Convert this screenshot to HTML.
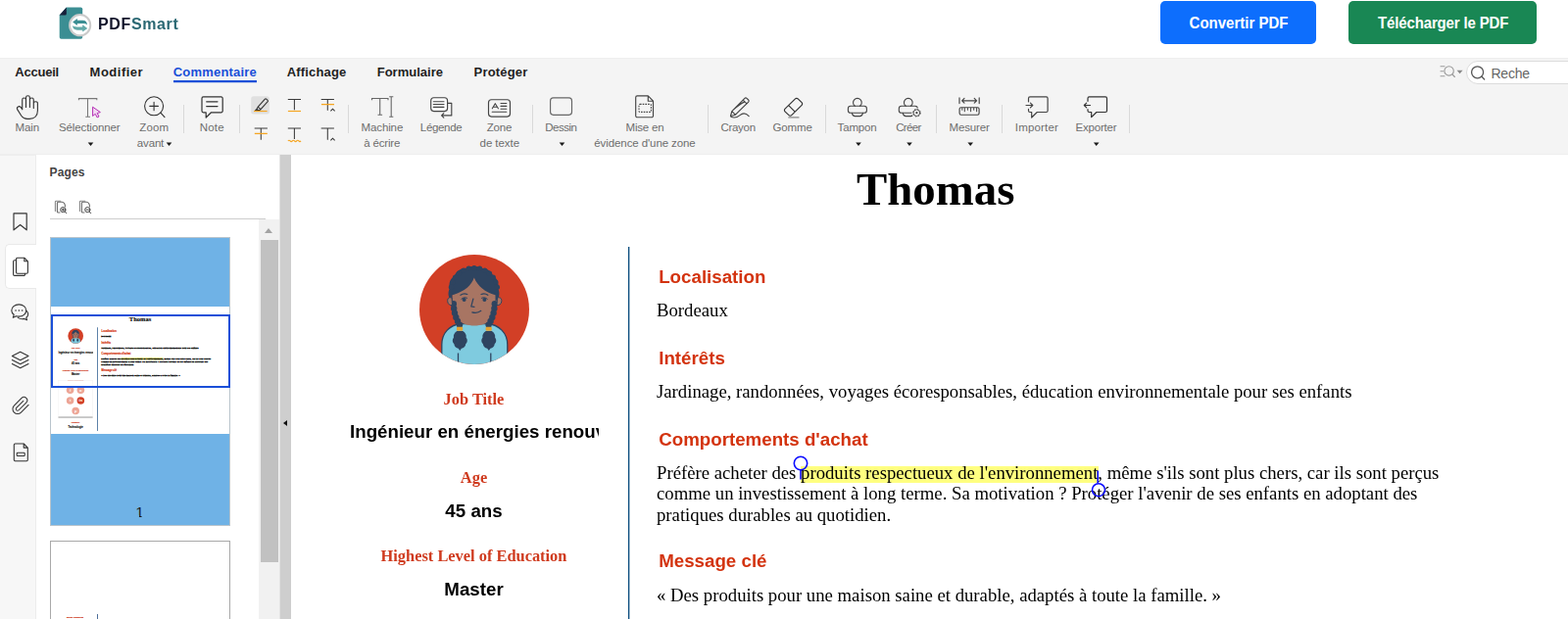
<!DOCTYPE html>
<html lang="fr">
<head>
<meta charset="utf-8">
<title>PDFSmart</title>
<style>
*{box-sizing:border-box;margin:0;padding:0}
html,body{width:1600px;height:632px;overflow:hidden;background:#fff}
body{position:relative;font-family:"Liberation Sans",sans-serif;color:#222}
.t{position:absolute;white-space:nowrap}
.a{position:absolute}
svg{position:absolute;overflow:visible}
.serif{font-family:"Liberation Serif",serif}
.b{font-weight:bold}
/* header */
#header{position:absolute;left:0;top:0;width:1600px;height:59px;background:#fff}
.btn{position:absolute;top:1px;height:44px;border-radius:5px}
.btn .t{color:#fff;font-weight:bold}
/* ribbon */
#ribbon{position:absolute;left:0;top:59px;width:1600px;height:100px;background:#f4f4f4;border-top:1px solid #eeeeee;border-bottom:2px solid #eeeeee}
.tab{font-weight:bold;color:#1f1f1f}
.tab.on{color:#1a4fd8}
.tl{color:#6e6e6e}
.sep{position:absolute;width:1px;background:#d9d9d9;top:107px;height:29px}
.car{position:absolute;width:0;height:0;border-left:2.900px solid transparent;border-right:2.900px solid transparent;border-top:3.300px solid #1a1a1a}
/* side */
#iconcol{position:absolute;left:0;top:159px;width:37px;height:473px;background:#f7f7f7;border-right:1px solid #ececec}
#pages{position:absolute;left:37px;top:158px;width:249px;height:474px;background:#fff}
#split{position:absolute;left:285px;top:158px;width:12px;height:474px;background:#cecece;border-left:1px solid #e3e3e3}
/* doc */
#doc{will-change:transform;position:absolute;left:297px;top:158px;width:1303px;height:474px;background:#fff;overflow:hidden}
.red{color:#d3330f}
.serif.red{color:#cf3a1e}
#mini .t{-webkit-text-stroke:.6px currentColor}
#mini .serif.blk:not(.b){-webkit-text-stroke:2.200px currentColor}
#mini .red{-webkit-text-stroke:1.100px currentColor}
#mini .vr{width:6px!important;background:#3f6a99!important;box-shadow:none!important}
.blk{color:#000}

</style>
</head>
<body>
<div id="header"></div><svg style="left:0px;top:0px" width="200" height="59" viewBox="0 0 200 59" ><path d="M67.800 7.500H82.400a1.800 1.800 0 0 1 1.800 1.800V37.900a1.800 1.800 0 0 1 -1.800 1.800H62.500a1.800 1.800 0 0 1 -1.800 -1.800V15.400z" fill="#3b8e93"/>
<path d="M67.800 7.500V13.900a1.500 1.500 0 0 1 -1.500 1.500H60.700z" fill="#17203a"/>
<circle cx="81.650" cy="25.700" r="10.600" fill="#fff" stroke="#cbcbcb" stroke-width="2"/>
<path d="M78.900 18.900L74.100 22.500 78.900 26.100V24.100H84.400C86.600 24.100 88 24.500 88.900 25.600 89 22.500 87.400 20.700 84.400 20.700H78.900z" fill="#3b8e93"/>
<path d="M84.200 25.300L89.300 28.900 84.200 32.500V30.700H78.900C75.900 30.700 74.100 28.900 74 26 75 27.100 76.400 27.400 78.900 27.400H84.200z" fill="#62a9a8"/></svg><div class="t b" style="top:15.26px;font-size:16px;line-height:20px;left:100.3px;letter-spacing:.62px;color:#11142a;will-change:transform;">PDF<span style="color:#2b6873">Smart</span></div><div class="btn" style="left:1184px;width:159px;background:#0d6efd"></div><div class="btn" style="left:1376px;width:192px;background:#198754"></div><div class="t b" style="top:14.80px;font-size:15px;line-height:18px;left:1264px;transform:translateX(-50%);text-align:center;color:#fff;transform:translateX(-50%) scaleY(1.08);transform-origin:50% 80%;">Convertir PDF</div><div class="t b" style="top:14.80px;font-size:15px;line-height:18px;left:1472.7px;transform:translateX(-50%);text-align:center;color:#fff;letter-spacing:-.15px;transform:translateX(-50%) scaleY(1.08);transform-origin:50% 80%;">Télécharger le PDF</div>
<div id="ribbon"></div><div class="t tab" style="top:65.60px;font-size:13px;line-height:16px;left:15.3px;letter-spacing:-0.236px;">Accueil</div><div class="t tab" style="top:65.60px;font-size:13px;line-height:16px;left:91.6px;letter-spacing:0.49px;">Modifier</div><div class="t tab on" style="top:65.60px;font-size:13px;line-height:16px;left:176.7px;letter-spacing:0.203px;">Commentaire</div><div class="t tab" style="top:65.60px;font-size:13px;line-height:16px;left:292.8px;letter-spacing:0.148px;">Affichage</div><div class="t tab" style="top:65.60px;font-size:13px;line-height:16px;left:384.7px;letter-spacing:0.021px;">Formulaire</div><div class="t tab" style="top:65.60px;font-size:13px;line-height:16px;left:483.6px;letter-spacing:0.167px;">Protéger</div><div class="a" style="left:177px;top:82px;width:85px;height:2px;background:#1a4fd8;box-shadow:0 1px 0 rgba(26,79,216,.25)"></div><div class="t tl" style="top:123.42px;font-size:11.5px;line-height:15px;left:15.4px;letter-spacing:-0.085px;">Main</div><div class="t tl" style="top:123.42px;font-size:11.5px;line-height:15px;left:60.05px;letter-spacing:-0.131px;">Sélectionner</div><div class="t tl" style="top:123.42px;font-size:11.5px;line-height:15px;left:142.3px;letter-spacing:0.122px;">Zoom</div><div class="t tl" style="top:138.62px;font-size:11.5px;line-height:15px;left:139.8px;letter-spacing:-0.154px;">avant</div><div class="t tl" style="top:123.42px;font-size:11.5px;line-height:15px;left:203.8px;letter-spacing:0.162px;">Note</div><div class="t tl" style="top:123.42px;font-size:11.5px;line-height:15px;left:368.55px;letter-spacing:-0.12px;">Machine</div><div class="t tl" style="top:138.62px;font-size:11.5px;line-height:15px;left:371.3px;letter-spacing:-0.193px;">à écrire</div><div class="t tl" style="top:123.42px;font-size:11.5px;line-height:15px;left:428.8px;letter-spacing:-0.315px;">Légende</div><div class="t tl" style="top:123.42px;font-size:11.5px;line-height:15px;left:496.7px;letter-spacing:-0.207px;">Zone</div><div class="t tl" style="top:138.62px;font-size:11.5px;line-height:15px;left:489.55px;letter-spacing:-0.063px;">de texte</div><div class="t tl" style="top:123.42px;font-size:11.5px;line-height:15px;left:556.3px;letter-spacing:-0.527px;">Dessin</div><div class="t tl" style="top:123.42px;font-size:11.5px;line-height:15px;left:638.55px;letter-spacing:-0.208px;">Mise en</div><div class="t tl" style="top:138.62px;font-size:11.5px;line-height:15px;left:606.3px;letter-spacing:-0.093px;">évidence d'une zone</div><div class="t tl" style="top:123.42px;font-size:11.5px;line-height:15px;left:735.4px;letter-spacing:-0.288px;">Crayon</div><div class="t tl" style="top:123.42px;font-size:11.5px;line-height:15px;left:788.55px;letter-spacing:-0.158px;">Gomme</div><div class="t tl" style="top:123.42px;font-size:11.5px;line-height:15px;left:854.55px;letter-spacing:-0.138px;">Tampon</div><div class="t tl" style="top:123.42px;font-size:11.5px;line-height:15px;left:914.2px;letter-spacing:-0.637px;">Créer</div><div class="t tl" style="top:123.42px;font-size:11.5px;line-height:15px;left:968.55px;letter-spacing:-0.159px;">Mesurer</div><div class="t tl" style="top:123.42px;font-size:11.5px;line-height:15px;left:1035.8px;letter-spacing:0.166px;">Importer</div><div class="t tl" style="top:123.42px;font-size:11.5px;line-height:15px;left:1097.55px;letter-spacing:-0.21px;">Exporter</div><div class="sep" style="left:187.0px"></div><div class="sep" style="left:243.5px"></div><div class="sep" style="left:354.8px"></div><div class="sep" style="left:542.8px"></div><div class="sep" style="left:722.0px"></div><div class="sep" style="left:841.8px"></div><div class="sep" style="left:954.9px"></div><div class="sep" style="left:1022.0px"></div><div class="sep" style="left:1151.9px"></div><div class="a" style="left:1496px;top:62px;width:130px;height:24px;border:1px solid #dcdcdc;border-radius:12px;background:#fff"></div><div class="t" style="top:65.85px;font-size:14px;line-height:18px;left:1521.5px;color:#666;letter-spacing:-.25px;">Reche</div><svg style="left:0px;top:0px" width="1600" height="160" viewBox="0 0 1600 160" ><g fill="none" stroke="#333" stroke-width="1.1" stroke-linecap="round" stroke-linejoin="round" ><path d="M22.700 111.400V101.900c0-1 .8-1.900 1.900-1.900s1.900.9 1.900 1.900V109.400M26.500 109.400V99.700c0-1.100.9-1.900 1.950-1.900s1.950.8 1.950 1.900V109.400M30.400 109.400V101.900c0-1.100.9-1.900 1.950-1.900s1.950.8 1.950 1.900V110.400M34.300 110.400V105.600c0-1 .9-1.800 2-1.800s2.100.8 2.100 1.800v7.200c0 5.300-3.300 8.600-8.300 8.600h-2.300c-2.700 0-4.500-1.100-6-3.200l-4-6.300c-.7-1.200-.3-2.300.6-2.900s2.100-.4 2.900.6l1.500 2.200" /></g><path d="M80.400 102.300V100.600H98.800V102.300M89.500 100.600V119.300M87.300 119.300H92" stroke="#777" stroke-width="1.050" fill="none"/><path d="M94.600 109.200V118.500l2.600-2.200 1.900 3.600 1.900-.9-1.800-3.500 3.200-.9z" fill="#f3d9f3" stroke="#b32cb3" stroke-width="1" stroke-linejoin="round"/><g fill="none" stroke="#333" stroke-width="1.1" stroke-linecap="round" stroke-linejoin="round" ><circle cx="157.100" cy="108.300" r="9.500"/><path d="M152.800 108.400H161.400M157.100 104.200V112.700M163.900 115.200L168 119.600"/></g><g fill="none" stroke="#333" stroke-width="1.2" stroke-linecap="round" stroke-linejoin="round" ><path d="M207.500 98.900H225.700a1.500 1.500 0 0 1 1.500 1.500V113.300a1.500 1.500 0 0 1 -1.500 1.500H215.500L210.200 120V114.800H207.500a1.500 1.500 0 0 1 -1.500 -1.500V100.400a1.500 1.500 0 0 1 1.500 -1.500z"/><path d="M210.700 103.800H222M210.700 108.600H222"/></g><rect x="256.200" y="98.200" width="18.700" height="18.300" rx="2.500" fill="#e0e0e0"/><g fill="none" stroke="#333" stroke-width="1.1" stroke-linecap="round" stroke-linejoin="round" ><path d="M263.200 109.200L270.400 101.200a1 1 0 0 1 1.400-.1l1.300 1.200a1 1 0 0 1 .1 1.400L266 111.700zM263.200 109.200L262 111.300 264 113 266 111.700M262 111.300L260.600 112.600 263 112.600 264 113"/></g><path d="M259 113.500H272.600" stroke="#f5a623" stroke-width="1.200"/><path d="M293.79999999999995 101.4H307.0M300.4 101.4V112.2" stroke="#3a3a3a" stroke-width="1.05" fill="none"/><path d="M293.900 113.500H307" stroke="#f5a623" stroke-width="1.200"/><path d="M327.7 101.4H340.90000000000003M334.3 101.4V112.7" stroke="#3a3a3a" stroke-width="1.05" fill="none"/><path d="M327.900 106.600H341" stroke="#f5a623" stroke-width="1.300"/><path d="M337.400 113.300L339.500 111.200 341.600 113.300" stroke="#333" stroke-width="1.100" fill="none"/><path d="M259.7 131H272.90000000000003M266.3 131V142.8" stroke="#3a3a3a" stroke-width="1.05" fill="none"/><path d="M259.800 136.400H272.800" stroke="#f5a623" stroke-width="1.300"/><path d="M293.79999999999995 131H307.0M300.4 131V142" stroke="#3a3a3a" stroke-width="1.05" fill="none"/><path d="M293.900 143.900q1.100-1.300 2.200 0t2.200 0 2.200 0 2.200 0 2.200 0 2.100 0" stroke="#f5a623" stroke-width="1.200" fill="none"/><path d="M327.7 131H340.90000000000003M334.3 131V142.8" stroke="#3a3a3a" stroke-width="1.05" fill="none"/><path d="M337.400 143.300L339.500 141.200 341.600 143.300" stroke="#333" stroke-width="1.100" fill="none"/><path d="M379.500 102.200V100.500H396V102.200M387.700 100.500V117.300M385.500 117.300H390.100M397.200 98.700H401.300M399.200 98.700V119.300M397.200 119.300H401.300" stroke="#666" stroke-width="1.100" fill="none"/><g fill="none" stroke="#444" stroke-width="1.15" stroke-linecap="round" stroke-linejoin="round" ><rect x="439.700" y="99.700" width="16.900" height="13.900" rx="3" fill="#fafafa"/><path d="M442.300 103.700H453M442.300 106.500H453M442.300 109.300H453"/><path d="M456.800 105.300H460.800V117.900H450.600M452.800 115.700L450.600 117.900 452.800 120.100"/></g><g fill="none" stroke="#444" stroke-width="1.15" stroke-linecap="round" stroke-linejoin="round" ><rect x="498.500" y="101.700" width="22" height="17.400" rx="3"/><path d="M502.300 110.800L505.300 105.700 508.400 110.800M503.300 109.300H507.400" stroke-width="1.100"/><path d="M511 105.500H516.800M511 108.400H516.800M511 111.200H516.800M502.200 114.300H516.800" stroke-width="1.100"/></g><g fill="none" stroke="#666" stroke-width="1.15" stroke-linecap="round" stroke-linejoin="round" ><rect x="561.600" y="99.900" width="21.900" height="17.400" rx="3"/></g><g fill="none" stroke="#444" stroke-width="1.15" stroke-linecap="round" stroke-linejoin="round" ><path d="M650.300 97.900H661.300L666.500 103.200V118.200a1.600 1.600 0 0 1 -1.600 1.600H650.300a1.600 1.600 0 0 1 -1.600 -1.600V99.500a1.600 1.600 0 0 1 1.600 -1.600zM661.300 97.900V103.200H666.500"/><rect x="652" y="106.400" width="12.400" height="8" rx="1" stroke-dasharray="1.600 1.100" stroke-width="1.100" stroke-linecap="butt"/></g><g fill="none" stroke="#444" stroke-width="1.2" stroke-linecap="round" stroke-linejoin="round" ><path d="M746.800 113.700L759.900 100.400a1.500 1.500 0 0 1 2.100 0L763.700 102a1.500 1.500 0 0 1 0 2.100L750.400 117.200 745.500 118.500zM758.200 102.200L762 105.900M746.800 113.700L750.400 117.200M748.900 111.700Q755 106 760 103.900" stroke-width="1.150"/><path d="M745.900 119.300C749.500 120.900 752.500 119.700 755 117.600 758 115.100 761 115.300 764.200 118.600" stroke-width="1.100"/></g><g fill="none" stroke="#333" stroke-width="1.15" stroke-linecap="round" stroke-linejoin="round" ><path d="M801 111.200L811.500 100.900a1.900 1.900 0 0 1 2.700 0L818.100 104.700a1.900 1.900 0 0 1 0 2.700L807.700 117.700a1.900 1.900 0 0 1 -2.700 0L801 113.900a1.900 1.900 0 0 1 0 -2.700zM804.700 107.600L811.200 114.200"/><path d="M804.800 119.900H815" stroke="#888"/></g><g fill="none" stroke="#444" stroke-width="1.1" stroke-linecap="round" stroke-linejoin="round" transform="translate(0 92)"><path d="M872.4 16.300A4.350 4.350 0 1 1 877.4 16.300"/><rect x="865.4" y="16.300" width="19" height="7" rx="2.600"/><path d="M869.3 23.300C869.8 25.500 870.5999999999999 26.600 872.3 26.600H877.5C879.1999999999999 26.600 880.0 25.500 880.5 23.300"/></g><g fill="none" stroke="#444" stroke-width="1.1" stroke-linecap="round" stroke-linejoin="round" transform="translate(0 92)"><path d="M924.3000000000001 16.300A4.350 4.350 0 1 1 929.3000000000001 16.300"/><rect x="917.3000000000001" y="16.300" width="19" height="7" rx="2.600"/><path d="M921.2 23.300C921.7 25.500 922.5 26.600 924.2 26.600H929.4000000000001C931.1 26.600 931.9000000000001 25.500 932.4000000000001 23.300"/></g><circle cx="935.400" cy="115.200" r="4.300" fill="#f4f4f4" stroke="#f4f4f4" stroke-width="1.500"/><g fill="none" stroke="#444" stroke-width="1" stroke-linecap="round" stroke-linejoin="round" ><circle cx="935.400" cy="115.200" r="3.900" stroke-width=".8" stroke-dasharray="1.500 1.560" stroke-linecap="butt"/><circle cx="935.400" cy="115.200" r="3.300" stroke-width=".9"/><circle cx="935.400" cy="115.200" r="1.100" fill="#444" stroke="none"/></g><g fill="none" stroke="#444" stroke-width="1.15" stroke-linecap="round" stroke-linejoin="round" ><path d="M979 99.900V105.600M999.200 99.900V105.600M981.600 102.800H996.600M984 100.400L981.600 102.800 984 105.200M994.200 100.400L996.600 102.800 994.200 105.200" stroke-width="1.150"/><rect x="979.100" y="109.700" width="20" height="7.500" rx="1.600"/><path d="M981.800 110V112.700M984.300 110V114.200M987.400 110V112.700M990.600 110V114.200M993.700 110V112.700M996.600 110V114.200" stroke-width="1" stroke-linecap="butt"/></g><g fill="none" stroke="#444" stroke-width="1.2" stroke-linecap="round" stroke-linejoin="round" ><path d="M1049.500 103.800V100.400a1.500 1.500 0 0 1 1.500-1.500H1067.600a1.500 1.500 0 0 1 1.500 1.500V113a1.500 1.500 0 0 1 -1.500 1.500H1058.300L1052.700 120V114.500H1051a1.500 1.500 0 0 1 -1.500 -1.500V111.400"/><path d="M1047 107.500H1053.700M1051.400 105.100L1053.800 107.500 1051.400 109.900" stroke-width="1.150"/></g><g fill="none" stroke="#333" stroke-width="1.2" stroke-linecap="round" stroke-linejoin="round" ><path d="M1110 103.300V100.400a1.500 1.500 0 0 1 1.500-1.500H1128a1.500 1.500 0 0 1 1.500 1.500V113a1.500 1.500 0 0 1 -1.500 1.500H1118.900L1113.700 119.700V114.500H1111.500a1.500 1.500 0 0 1 -1.500 -1.500V111.700"/><path d="M1106.300 107.500H1112.500M1108.700 105.100L1106.300 107.500 1108.700 109.900" stroke-width="1.150"/></g><g fill="none" stroke="#9a9a9a" stroke-width="1.1" stroke-linecap="round" stroke-linejoin="round" ><path d="M1470 67.700H1474M1470 72.700H1472.700M1470 77.700H1474"/><circle cx="1478.600" cy="72.400" r="4.700"/><path d="M1482 76L1484.400 78.500"/></g><path d="M1486.600 71.700H1492.600L1489.600 75.200z" fill="#8a8a8a"/><path d="M89.7 145.6H95.3L92.5 148.9z" fill="#1a1a1a"/><path d="M169.7 145.6H175.3L172.5 148.9z" fill="#1a1a1a"/><path d="M570.7 145.6H576.3L573.5 148.9z" fill="#1a1a1a"/><path d="M873.2 145.6H878.8L876.0 148.9z" fill="#1a1a1a"/><path d="M925.2 145.6H930.8L928.0 148.9z" fill="#1a1a1a"/><path d="M987.4 145.6H993.0L990.2 148.9z" fill="#1a1a1a"/><path d="M1115.9 145.6H1121.5L1118.7 148.9z" fill="#1a1a1a"/><g fill="none" stroke="#555" stroke-width="1.3" stroke-linecap="round" stroke-linejoin="round" ><circle cx="1507.600" cy="73.800" r="6"/><path d="M1512 78.300L1514.700 81"/></g></svg>
<div id="iconcol"></div><div id="pages"></div><div id="split"></div><div class="a" style="left:5px;top:249px;width:32px;height:46px;background:#fff;border:1px solid #e9e9e9;border-right:0;border-radius:5px 0 0 5px"></div><div class="t b" style="top:168.94px;font-size:12px;line-height:15px;left:50.5px;color:#444;letter-spacing:.15px;">Pages</div><div class="a" style="left:51px;top:223px;width:220px;height:1px;background:#cdcdcd"></div><div class="a" style="left:264px;top:224px;width:21px;height:408px;background:#f1f1f1"></div><div class="a" style="left:266px;top:245px;width:18px;height:329px;background:#c1c1c1"></div><div class="a" style="left:270px;top:232.500px;width:0;height:0;border-left:4.500px solid transparent;border-right:4.500px solid transparent;border-bottom:5px solid #a3a3a3"></div><div class="a" style="left:288.500px;top:428.500px;width:0;height:0;border-top:3px solid transparent;border-bottom:3px solid transparent;border-right:4.500px solid #111"></div><div class="a" style="left:51px;top:242px;width:184px;height:294.500px;background:#6fb2e6;border:1px solid #b9c4cc"></div><div class="a" style="left:52px;top:313px;width:182px;height:130px;background:#fff;overflow:hidden"><div class="a" id="mini" style="left:-1.500px;top:0;width:1303px;height:942px;transform:scale(.14,.138);transform-origin:0 0"><div class="t serif b blk" style="top:67.59px;font-size:46.83px;line-height:54px;left:657.7px;transform:translateX(-50%);text-align:center;">Thomas</div><div class="a vr" style="left:344px;top:154.0px;width:1px;height:766.0px;background:#0e4f80;box-shadow:1px 0 0 rgba(14,79,128,.35),-1px 0 0 rgba(14,79,128,.1)"></div><svg style="left:131px;top:162px" width="112" height="112" viewBox="0 0 112 112" ><defs><clipPath id="avm"><circle cx="56" cy="56" r="56"/></clipPath></defs>
<circle cx="56" cy="56" r="56" fill="#d23f26"/>
<g clip-path="url(#avm)">
<path d="M22.8 114V92c0-12 8-20.500 20-21.500h26.500c12 1 20.500 9.500 20.500 21.500v22z" fill="#7fcbdf" stroke="#2e4460" stroke-width="1.300"/>
<path d="M39.500 100.500V114M72.800 100.500V114" stroke="#2e4460" stroke-width="1.300" fill="none"/>

<path d="M33.500 36c0-9 8-14 22.500-14s23 5 23 14v17c0 11-9 19.500-23 19.500s-22.500-8.500-22.500-19.500z" fill="#a87563"/>
<path d="M55.800 23.500c-3 8-9 13.500-20.500 17.200l-1.800.6v6c-3.500-1-5.500-8.300-2.500-12.800-1.500-5.500.5-10 4.500-12.500 2-5.500 7-8.500 12.500-8.300 4.500-2.700 10.500-2.700 15 0 5.500-.2 10.500 2.800 12.500 8.300 4 2.500 6 7 4.500 12.500 3 4.500 1 11.800-2.500 12.800v-6c-10.500-3-18-9-21.700-17.800z" fill="#2e4460"/>
<g fill="#2e4460"><circle cx="32.5" cy="33.3" r="2.700"/><circle cx="34.0" cy="28.1" r="2.700"/><circle cx="36.6" cy="23.3" r="2.700"/><circle cx="40.4" cy="19.3" r="2.700"/><circle cx="45.1" cy="16.2" r="2.700"/><circle cx="50.3" cy="14.3" r="2.700"/><circle cx="55.9" cy="13.7" r="2.700"/><circle cx="61.5" cy="14.3" r="2.700"/><circle cx="66.7" cy="16.2" r="2.700"/><circle cx="71.4" cy="19.3" r="2.700"/><circle cx="75.2" cy="23.3" r="2.700"/><circle cx="77.8" cy="28.1" r="2.700"/><circle cx="79.3" cy="33.3" r="2.700"/></g><g fill="#2e4460"><circle cx="34.8" cy="50.3" r="3.200"/><circle cx="76.8" cy="50.3" r="3.200"/><circle cx="35.2" cy="55" r="3.200"/><circle cx="76.4" cy="55" r="3.200"/><circle cx="36" cy="59.6" r="3.200"/><circle cx="75.6" cy="59.6" r="3.200"/><circle cx="37.3" cy="64" r="3.200"/><circle cx="74.3" cy="64" r="3.200"/><circle cx="39" cy="68" r="3.200"/><circle cx="72.6" cy="68" r="3.200"/><circle cx="41" cy="71.6" r="3.200"/><circle cx="70.6" cy="71.6" r="3.200"/></g>
<path d="M38.300 78c-2.500 1.500-4 4-3.300 6.500-1.800 2-1.600 5 .4 6.800.2 2.500 2 4.300 4.300 4.500l1.600 2.200 1.600-2.200c2.300-.2 4.100-2 4.300-4.500 2-1.800 2.200-4.800.4-6.800.7-2.500-.8-5-3.300-6.500zM67.800 78c-2.500 1.500-4 4-3.300 6.500-1.800 2-1.600 5 .4 6.800.2 2.500 2 4.300 4.300 4.500l1.600 2.200 1.600-2.200c2.300-.2 4.100-2 4.300-4.500 2-1.800 2.200-4.800.4-6.800.7-2.500-.8-5-3.300-6.500z" fill="#2e4460"/>
<path d="M33 44c-3-1-4.500 1-4.300 3.500.3 3 2.300 4.500 4.800 4zM79.500 44c3-1 4.500 1 4.300 3.500-.3 3-2.300 4.500-4.800 4z" fill="#a87563" stroke="#2e4460" stroke-width="1"/>
<rect x="38" y="73.800" width="6.200" height="4" rx="1" fill="#e3a233"/><rect x="67.600" y="73.800" width="6.200" height="4" rx="1" fill="#e3a233"/>
<circle cx="45.600" cy="45.900" r="2" fill="#2e4460"/><circle cx="66.400" cy="45.900" r="2" fill="#2e4460"/><path d="M42.800 45.300c1.500-1.600 3.800-2 5.800-1M63.500 44.300c2-1 4.300-.6 5.800 1" stroke="#2e4460" stroke-width="1" fill="none" stroke-linecap="round"/>
<path d="M42 41.300c2-1.500 4.500-1.700 6.800-.8M63 40.500c2.300-.9 4.800-.7 6.800.8M54.900 45l-2.100 7.900 3.200.4M53.800 58.800c3.200.9 6.600.4 9-1.500" stroke="#2e4460" stroke-width="1.200" fill="none" stroke-linecap="round" stroke-linejoin="round"/>
</g></svg><div class="a" style="left:59px;top:0;width:255px;height:942px;overflow:hidden"><div class="t serif b red" style="left:0;width:255px;text-align:center;top:299.96px;font-size:16.4px;line-height:20px">Job Title</div><div class="t b blk" style="left:1px;top:332.01px;font-size:18.73px;line-height:22px">Ingénieur en énergies renouvelables</div><div class="t serif b red" style="left:0;width:255px;text-align:center;top:380.06px;font-size:16.4px;line-height:20px">Age</div><div class="t b blk" style="left:0;width:255px;text-align:center;top:413.01px;font-size:18.73px;line-height:22px">45 ans</div><div class="t serif b red" style="left:0;width:255px;text-align:center;top:459.67px;font-size:16.4px;line-height:20px">Highest Level of Education</div><div class="t b blk" style="left:0;width:255px;text-align:center;top:492.61px;font-size:18.73px;line-height:22px">Master</div><div class="t serif b red" style="left:0;width:255px;text-align:center;top:534.47px;font-size:16.4px;line-height:20px">Social Networks</div><div class="a" style="left:0;top:546px;width:253px;height:276px;border:2px solid #e0e0e0;border-bottom:6px solid #808080;background:#fff"></div><div class="a" style="left:61px;top:591px;width:54px;height:54px;border-radius:50%;background:#eda595;color:#fff;font:bold 28px/54px 'Liberation Sans',sans-serif;text-align:center">f</div><div class="a" style="left:137.60000000000002px;top:591px;width:54px;height:54px;border-radius:50%;background:#eda595;color:#fff;font:bold 28px/54px 'Liberation Sans',sans-serif;text-align:center">o</div><div class="a" style="left:61px;top:668.6px;width:54px;height:54px;border-radius:50%;background:#eda595;color:#fff;font:bold 28px/54px 'Liberation Sans',sans-serif;text-align:center">t</div><div class="a" style="left:137.60000000000002px;top:668.6px;width:54px;height:54px;border-radius:50%;background:#d23f26;color:#fff;font:bold 28px/54px 'Liberation Sans',sans-serif;text-align:center">in</div><div class="a" style="left:101px;top:744.7px;width:54px;height:54px;border-radius:50%;background:#eda595;color:#fff;font:bold 28px/54px 'Liberation Sans',sans-serif;text-align:center">p</div><div class="t serif b red" style="left:0;width:255px;text-align:center;top:846.47px;font-size:16.4px;line-height:20px">Industry</div><div class="t b blk" style="left:0;width:255px;text-align:center;top:879.51px;font-size:18.73px;line-height:22px">Technologie</div></div><div class="t b red" style="top:173.51px;font-size:18.73px;line-height:22px;left:375.2px;">Localisation</div><div class="t serif blk" style="top:207.55px;font-size:18.73px;line-height:21.45px;left:373.0px;">Bordeaux</div><div class="t b red" style="top:257.41px;font-size:18.73px;line-height:22px;left:375.2px;">Intérêts</div><div class="t serif blk" style="top:290.85px;font-size:18.73px;line-height:21.45px;left:373.0px;">Jardinage, randonnées, voyages écoresponsables, éducation environnementale pour ses enfants</div><div class="t b red" style="top:339.71px;font-size:18.73px;line-height:22px;left:375.2px;">Comportements d'achat</div><div class="a" style="left:520px;top:378.2px;width:303.8px;height:16.6px;background:#ffff80"></div><div class="t serif blk" style="top:373.65px;font-size:18.73px;line-height:21.45px;left:373.0px;">Préfère acheter des produits respectueux de l'environnement, même s'ils sont plus chers, car ils sont perçus</div><div class="t serif blk" style="top:395.05px;font-size:18.73px;line-height:21.45px;left:373.0px;">comme un investissement à long terme. Sa motivation ? Protéger l'avenir de ses enfants en adoptant des</div><div class="t serif blk" style="top:417.35px;font-size:18.73px;line-height:21.45px;left:373.0px;">pratiques durables au quotidien.</div><div class="t b red" style="top:464.11px;font-size:18.73px;line-height:22px;left:375.2px;">Message clé</div><div class="t serif blk" style="top:498.75px;font-size:18.73px;line-height:21.45px;left:373.0px;">« Des produits pour une maison saine et durable, adaptés à toute la famille. »</div></div></div><div class="a" style="left:52px;top:321px;width:182.500px;height:74.500px;border:2px solid #1a4fd8"></div><div class="t" style="top:513.90px;font-size:15.3px;line-height:18px;left:142.6px;transform:translateX(-50%);text-align:center;color:#1c1c1c;clip-path:polygon(0 0,100% 0,100% 12.400px,6.200px 12.400px,6.200px 100%,3.600px 100%,3.600px 12.400px,0 12.400px);">1</div><div class="a" style="left:51px;top:552px;width:184px;height:120px;background:#fff;border:1px solid #a9a9a9"></div><div class="a" style="left:99px;top:627px;width:1px;height:10px;background:#4d6f99"></div><div class="t serif b red" style="left:68px;top:628.600px;font-size:16.400px;line-height:20px;transform:scale(.15,.15);transform-origin:0 0;-webkit-text-stroke:1.200px currentColor">Social Networks</div><svg style="left:0px;top:0px" width="300" height="632" viewBox="0 0 300 632" ><g fill="none" stroke="#333" stroke-width="1.15" stroke-linecap="round" stroke-linejoin="round" ><path d="M14 217.900H27.200V234.800L20.600 229.500 14 234.800z"/></g><g fill="none" stroke="#333" stroke-width="1.1" stroke-linecap="round" stroke-linejoin="round" ><path d="M16.300 265.800H14.800a1.200 1.200 0 0 0 -1.200 1.200V280.200a1.200 1.200 0 0 0 1.200 1.200H24.300a1.200 1.200 0 0 0 1.200 -1.200V279.300"/><path d="M17.700 263.200H24.800L28.400 266.800V278.100a1.200 1.200 0 0 1 -1.200 1.200H17.700a1.200 1.200 0 0 1 -1.200 -1.200V264.400a1.200 1.200 0 0 1 1.200 -1.200zM24.800 263.200V266.800H28.400"/></g><g fill="none" stroke="#333" stroke-width="1.1" stroke-linecap="round" stroke-linejoin="round" ><path d="M19.300 310.900c4.200 0 7.400 2.700 7.400 6.100s-3.200 6.100-7.400 6.100c-1 0-1.900-.1-2.700-.4l-3.300 1.500 .9-2.900c-1.500-1.100-2.400-2.600-2.400-4.300 0-3.400 3.300-6.100 7.500-6.100z"/><path d="M27.300 317.600c.9 .9 1.400 2 1.400 3.200 0 1.400-.7 2.600-1.900 3.500l.7 2.400-2.700-1.300c-.7 .2-1.400 .3-2.200 .3-1.700 0-3.200-.5-4.300-1.300"/><path d="M16 317h.1M19.300 317h.1M22.600 317h.1" stroke-width="1.500"/></g><g fill="none" stroke="#333" stroke-width="1.1" stroke-linecap="round" stroke-linejoin="round" ><path d="M20.700 359.300L29 363.500 20.700 367.700 12.400 363.500zM12.400 367.500L20.700 371.700 29 367.500M12.400 371.500L20.700 375.700 29 371.500"/></g><g fill="none" stroke="#333" stroke-width="1.25" stroke-linecap="round" stroke-linejoin="round" transform="translate(11.300 404.300) scale(.83)"><path d="M21.440 11.050l-9.190 9.190a6 6 0 0 1-8.490-8.490l9.190-9.190a4 4 0 0 1 5.660 5.660l-9.200 9.190a2 2 0 0 1-2.830-2.830l8.490-8.480"/></g><g fill="none" stroke="#333" stroke-width="1.1" stroke-linecap="round" stroke-linejoin="round" ><path d="M15.500 453H24.200L28.300 457.100V469.500a1.200 1.200 0 0 1 -1.200 1.200H15.500a1.200 1.200 0 0 1 -1.200 -1.200V454.200a1.200 1.200 0 0 1 1.200 -1.200zM24.200 453V457.100H28.300"/><rect x="17.200" y="462.200" width="8" height="3.300" rx=".8"/></g><g fill="none" stroke="#333" stroke-width="1.1" stroke-linecap="round" stroke-linejoin="round" transform="translate(0 204.700)"><path d="M61.8 .500H57.4a1 1 0 0 0 -1 1V10.8" stroke="#8a8a8a"/><path d="M61 12.300H59.4a1 1 0 0 1 -1 -1V2.6a1 1 0 0 1 1 -1H63.2C65 1.800 66.4 3.400 66.5 6.300" stroke="#6a6a6a"/><circle cx="64.3" cy="9.400" r="2.600" stroke="#333" stroke-width=".9"/><path d="M66.2 11.400L67.8 13M63.1 9.400H65.5M64.3 8.200V10.600" stroke="#333" stroke-width=".9"/></g><g fill="none" stroke="#333" stroke-width="1.1" stroke-linecap="round" stroke-linejoin="round" transform="translate(0 204.700)"><path d="M86.8 .500H82.4a1 1 0 0 0 -1 1V10.8" stroke="#8a8a8a"/><path d="M86 12.300H84.4a1 1 0 0 1 -1 -1V2.6a1 1 0 0 1 1 -1H88.2C90 1.800 91.4 3.400 91.5 6.300" stroke="#6a6a6a"/><circle cx="89.3" cy="9.400" r="2.600" stroke="#333" stroke-width=".9"/><path d="M91.2 11.400L92.8 13M88.1 9.400H90.5" stroke="#333" stroke-width=".9"/></g></svg>
<div id="doc"><div class="a" id="page" style="left:0;top:-60px;width:1303px;height:942px"><div class="t serif b blk" style="top:67.59px;font-size:46.83px;line-height:54px;left:657.7px;transform:translateX(-50%);text-align:center;">Thomas</div><div class="a vr" style="left:344px;top:154.0px;width:1px;height:766.0px;background:#0e4f80;box-shadow:1px 0 0 rgba(14,79,128,.35),-1px 0 0 rgba(14,79,128,.1)"></div><svg style="left:131px;top:162px" width="112" height="112" viewBox="0 0 112 112" ><defs><clipPath id="avc"><circle cx="56" cy="56" r="56"/></clipPath></defs>
<circle cx="56" cy="56" r="56" fill="#d23f26"/>
<g clip-path="url(#avc)">
<path d="M22.8 114V92c0-12 8-20.500 20-21.500h26.500c12 1 20.500 9.500 20.500 21.500v22z" fill="#7fcbdf" stroke="#2e4460" stroke-width="1.300"/>
<path d="M39.500 100.500V114M72.800 100.500V114" stroke="#2e4460" stroke-width="1.300" fill="none"/>

<path d="M33.500 36c0-9 8-14 22.500-14s23 5 23 14v17c0 11-9 19.500-23 19.500s-22.500-8.500-22.500-19.500z" fill="#a87563"/>
<path d="M55.800 23.500c-3 8-9 13.500-20.500 17.200l-1.800.6v6c-3.500-1-5.500-8.300-2.500-12.800-1.500-5.500.5-10 4.500-12.500 2-5.500 7-8.500 12.500-8.300 4.500-2.700 10.500-2.700 15 0 5.500-.2 10.500 2.800 12.500 8.300 4 2.500 6 7 4.500 12.500 3 4.500 1 11.800-2.500 12.800v-6c-10.500-3-18-9-21.700-17.800z" fill="#2e4460"/>
<g fill="#2e4460"><circle cx="32.5" cy="33.3" r="2.700"/><circle cx="34.0" cy="28.1" r="2.700"/><circle cx="36.6" cy="23.3" r="2.700"/><circle cx="40.4" cy="19.3" r="2.700"/><circle cx="45.1" cy="16.2" r="2.700"/><circle cx="50.3" cy="14.3" r="2.700"/><circle cx="55.9" cy="13.7" r="2.700"/><circle cx="61.5" cy="14.3" r="2.700"/><circle cx="66.7" cy="16.2" r="2.700"/><circle cx="71.4" cy="19.3" r="2.700"/><circle cx="75.2" cy="23.3" r="2.700"/><circle cx="77.8" cy="28.1" r="2.700"/><circle cx="79.3" cy="33.3" r="2.700"/></g><g fill="#2e4460"><circle cx="34.8" cy="50.3" r="3.200"/><circle cx="76.8" cy="50.3" r="3.200"/><circle cx="35.2" cy="55" r="3.200"/><circle cx="76.4" cy="55" r="3.200"/><circle cx="36" cy="59.6" r="3.200"/><circle cx="75.6" cy="59.6" r="3.200"/><circle cx="37.3" cy="64" r="3.200"/><circle cx="74.3" cy="64" r="3.200"/><circle cx="39" cy="68" r="3.200"/><circle cx="72.6" cy="68" r="3.200"/><circle cx="41" cy="71.6" r="3.200"/><circle cx="70.6" cy="71.6" r="3.200"/></g>
<path d="M38.300 78c-2.500 1.500-4 4-3.300 6.500-1.800 2-1.600 5 .4 6.800.2 2.500 2 4.300 4.300 4.500l1.600 2.200 1.600-2.200c2.300-.2 4.100-2 4.300-4.500 2-1.800 2.200-4.800.4-6.800.7-2.500-.8-5-3.300-6.500zM67.800 78c-2.500 1.500-4 4-3.300 6.500-1.800 2-1.600 5 .4 6.800.2 2.500 2 4.300 4.300 4.500l1.600 2.200 1.600-2.200c2.300-.2 4.100-2 4.300-4.500 2-1.800 2.200-4.800.4-6.800.7-2.500-.8-5-3.300-6.500z" fill="#2e4460"/>
<path d="M33 44c-3-1-4.500 1-4.300 3.500.3 3 2.300 4.500 4.800 4zM79.500 44c3-1 4.500 1 4.300 3.500-.3 3-2.300 4.500-4.800 4z" fill="#a87563" stroke="#2e4460" stroke-width="1"/>
<rect x="38" y="73.800" width="6.200" height="4" rx="1" fill="#e3a233"/><rect x="67.600" y="73.800" width="6.200" height="4" rx="1" fill="#e3a233"/>
<circle cx="45.600" cy="45.900" r="2" fill="#2e4460"/><circle cx="66.400" cy="45.900" r="2" fill="#2e4460"/><path d="M42.800 45.300c1.500-1.600 3.800-2 5.800-1M63.500 44.300c2-1 4.300-.6 5.800 1" stroke="#2e4460" stroke-width="1" fill="none" stroke-linecap="round"/>
<path d="M42 41.300c2-1.500 4.500-1.700 6.800-.8M63 40.500c2.300-.9 4.800-.7 6.800.8M54.900 45l-2.100 7.900 3.200.4M53.800 58.800c3.200.9 6.600.4 9-1.500" stroke="#2e4460" stroke-width="1.200" fill="none" stroke-linecap="round" stroke-linejoin="round"/>
</g></svg><div class="a" style="left:59px;top:0;width:255px;height:942px;overflow:hidden"><div class="t serif b red" style="left:0;width:255px;text-align:center;top:299.96px;font-size:16.4px;line-height:20px">Job Title</div><div class="t b blk" style="left:1px;top:332.01px;font-size:18.73px;line-height:22px">Ingénieur en énergies renouvelables</div><div class="t serif b red" style="left:0;width:255px;text-align:center;top:380.06px;font-size:16.4px;line-height:20px">Age</div><div class="t b blk" style="left:0;width:255px;text-align:center;top:413.01px;font-size:18.73px;line-height:22px">45 ans</div><div class="t serif b red" style="left:0;width:255px;text-align:center;top:459.67px;font-size:16.4px;line-height:20px">Highest Level of Education</div><div class="t b blk" style="left:0;width:255px;text-align:center;top:492.61px;font-size:18.73px;line-height:22px">Master</div><div class="t serif b red" style="left:0;width:255px;text-align:center;top:534.47px;font-size:16.4px;line-height:20px">Social Networks</div><div class="a" style="left:0;top:546px;width:253px;height:276px;border:2px solid #e0e0e0;border-bottom:6px solid #808080;background:#fff"></div><div class="a" style="left:61px;top:591px;width:54px;height:54px;border-radius:50%;background:#eda595;color:#fff;font:bold 28px/54px 'Liberation Sans',sans-serif;text-align:center">f</div><div class="a" style="left:137.60000000000002px;top:591px;width:54px;height:54px;border-radius:50%;background:#eda595;color:#fff;font:bold 28px/54px 'Liberation Sans',sans-serif;text-align:center">o</div><div class="a" style="left:61px;top:668.6px;width:54px;height:54px;border-radius:50%;background:#eda595;color:#fff;font:bold 28px/54px 'Liberation Sans',sans-serif;text-align:center">t</div><div class="a" style="left:137.60000000000002px;top:668.6px;width:54px;height:54px;border-radius:50%;background:#d23f26;color:#fff;font:bold 28px/54px 'Liberation Sans',sans-serif;text-align:center">in</div><div class="a" style="left:101px;top:744.7px;width:54px;height:54px;border-radius:50%;background:#eda595;color:#fff;font:bold 28px/54px 'Liberation Sans',sans-serif;text-align:center">p</div><div class="t serif b red" style="left:0;width:255px;text-align:center;top:846.47px;font-size:16.4px;line-height:20px">Industry</div><div class="t b blk" style="left:0;width:255px;text-align:center;top:879.51px;font-size:18.73px;line-height:22px">Technologie</div></div><div class="t b red" style="top:173.51px;font-size:18.73px;line-height:22px;left:375.2px;">Localisation</div><div class="t serif blk" style="top:207.55px;font-size:18.73px;line-height:21.45px;left:373.0px;">Bordeaux</div><div class="t b red" style="top:257.41px;font-size:18.73px;line-height:22px;left:375.2px;">Intérêts</div><div class="t serif blk" style="top:290.85px;font-size:18.73px;line-height:21.45px;left:373.0px;">Jardinage, randonnées, voyages écoresponsables, éducation environnementale pour ses enfants</div><div class="t b red" style="top:339.71px;font-size:18.73px;line-height:22px;left:375.2px;">Comportements d'achat</div><div class="a" style="left:520px;top:378.2px;width:303.8px;height:16.6px;background:#ffff80"></div><div class="t serif blk" style="top:373.65px;font-size:18.73px;line-height:21.45px;left:373.0px;">Préfère acheter des produits respectueux de l'environnement, même s'ils sont plus chers, car ils sont perçus</div><div class="t serif blk" style="top:395.05px;font-size:18.73px;line-height:21.45px;left:373.0px;">comme un investissement à long terme. Sa motivation ? Protéger l'avenir de ses enfants en adoptant des</div><div class="t serif blk" style="top:417.35px;font-size:18.73px;line-height:21.45px;left:373.0px;">pratiques durables au quotidien.</div><div class="t b red" style="top:464.11px;font-size:18.73px;line-height:22px;left:375.2px;">Message clé</div><div class="t serif blk" style="top:498.75px;font-size:18.73px;line-height:21.45px;left:373.0px;">« Des produits pour une maison saine et durable, adaptés à toute la famille. »</div><svg style="left:0px;top:0px" width="1303" height="534" viewBox="0 0 1303 534" ><g fill="none" stroke="#0b0bff" stroke-width="1.600"><circle cx="520" cy="375" r="6.700"/><path d="M520 381.700V391.600"/><path d="M823.200 382.500V395.500"/><circle cx="824" cy="402.200" r="6.500"/></g></svg></div></div>
</body>
</html>
